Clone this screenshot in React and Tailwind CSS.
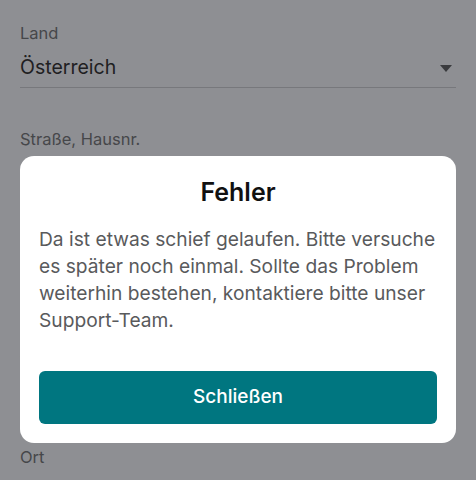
import React from 'react';

const fields = [
  { label: 'Land', value: 'Österreich', select: true },
  { label: 'Straße, Hausnr.', value: '' },
  { label: 'PLZ', value: '' },
  { label: 'Adresszusatz', value: '' },
  { label: 'Ort', value: '' },
];

const Field = ({ label, value, select }) => (
  <div className="h-[106px]">
    <div className="h-[22px] text-[16.5px] leading-[22px] text-[#46474a]">{label}</div>
    <div className="mt-[10px] flex h-[28px] items-center justify-between">
      <span className="text-[19.5px] text-[#1f2022]">{value}</span>
      {select && (
        <svg width="12" height="7" viewBox="0 0 12 7" className="mr-[4px]">
          <path d="M0 0h12L6 7z" fill="#3a3b3e" />
        </svg>
      )}
    </div>
    <div className="mt-[5px] h-px bg-[#77787c]" />
  </div>
);

export default function App() {
  return (
    <div className="relative h-[480px] w-[476px] overflow-hidden bg-[#8e8f93] font-['Inter',sans-serif]">
      <div className="px-5 pt-[22px]">
        {fields.map((f) => (
          <Field key={f.label} {...f} />
        ))}
      </div>

      <div className="absolute inset-0 px-5 pt-[156px]">
        <div className="rounded-[14px] bg-white px-[19px] pb-[19px] pt-5">
          <h2 className="text-center text-[25px] font-semibold leading-[32px] text-[#111]">Fehler</h2>
          <p className="mt-[18px] text-[19.2px] leading-[27px] text-[#595a5c]">
            Da ist etwas schief gelaufen. Bitte versuche es später noch einmal. Sollte das Problem weiterhin bestehen, kontaktiere bitte unser Support-Team.
          </p>
          <button className="mt-[37px] flex h-[53px] w-full items-center justify-center rounded-[6px] bg-[#007680] text-[19px] font-medium text-white">
            Schließen
          </button>
        </div>
      </div>
    </div>
  );
}
